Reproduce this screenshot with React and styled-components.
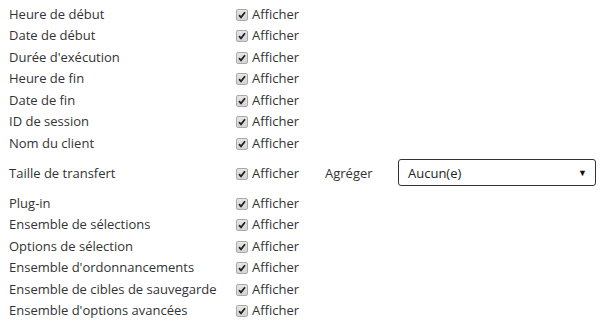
import React from "react";
import styled, { createGlobalStyle } from "styled-components";

const GlobalStyle = createGlobalStyle`
  body {
    margin: 0;
    background: #fff;
    font-family: "Open Sans", "Liberation Sans", sans-serif;
    font-size: 13px;
    color: #333;
  }
`;

const fields = [
  "Heure de début",
  "Date de début",
  "Durée d'exécution",
  "Heure de fin",
  "Date de fin",
  "ID de session",
  "Nom du client",
  { label: "Taille de transfert", aggregate: true },
  "Plug-in",
  "Ensemble de sélections",
  "Options de sélection",
  "Ensemble d'ordonnancements",
  "Ensemble de cibles de sauvegarde",
  "Ensemble d'options avancées",
];

const Form = styled.div`
  display: flex;
  flex-direction: column;
  padding: 3px 0 0 9px;
`;

const Row = styled.div`
  display: grid;
  grid-template-columns: 227px 89px 73px 198px;
  align-items: center;
  height: ${(p) => (p.$tall ? "38.5px" : "21.5px")};
`;

const Label = styled.span`
  white-space: nowrap;
`;

const Check = styled.label`
  display: flex;
  align-items: center;
  gap: 4px;
`;

const Box = styled.span`
  width: 10px;
  height: 10px;
  margin-top: 2px;
  border: 1px solid #a9a9a9;
  border-radius: 2px;
  background: linear-gradient(#e6e6e6, #d4d4d4);
  display: flex;
  align-items: center;
  justify-content: center;
`;

const Select = styled.div`
  height: 25px;
  border: 1px solid #333;
  border-radius: 3px;
  display: flex;
  align-items: center;
  justify-content: space-between;
  padding: 0 8px 0 9px;
  color: #222;
`;

const Arrow = styled.span`
  font-size: 9px;
  color: #111;
`;

function CheckBox() {
  return (
    <Box>
      <svg width="8" height="8" viewBox="0 0 8 8">
        <path d="M1 4.2 L3 6.3 L7 1.2" fill="none" stroke="#222" strokeWidth="1.8" />
      </svg>
    </Box>
  );
}

export default function App() {
  return (
    <>
      <GlobalStyle />
      <Form>
        {fields.map((f) => {
          const label = typeof f === "string" ? f : f.label;
          const agg = typeof f !== "string" && f.aggregate;
          return (
            <Row key={label} $tall={agg}>
              <Label>{label}</Label>
              <Check>
                <CheckBox />
                Afficher
              </Check>
              {agg && (
                <>
                  <Label>Agréger</Label>
                  <Select>
                    Aucun(e)
                    <Arrow>▼</Arrow>
                  </Select>
                </>
              )}
            </Row>
          );
        })}
      </Form>
    </>
  );
}
